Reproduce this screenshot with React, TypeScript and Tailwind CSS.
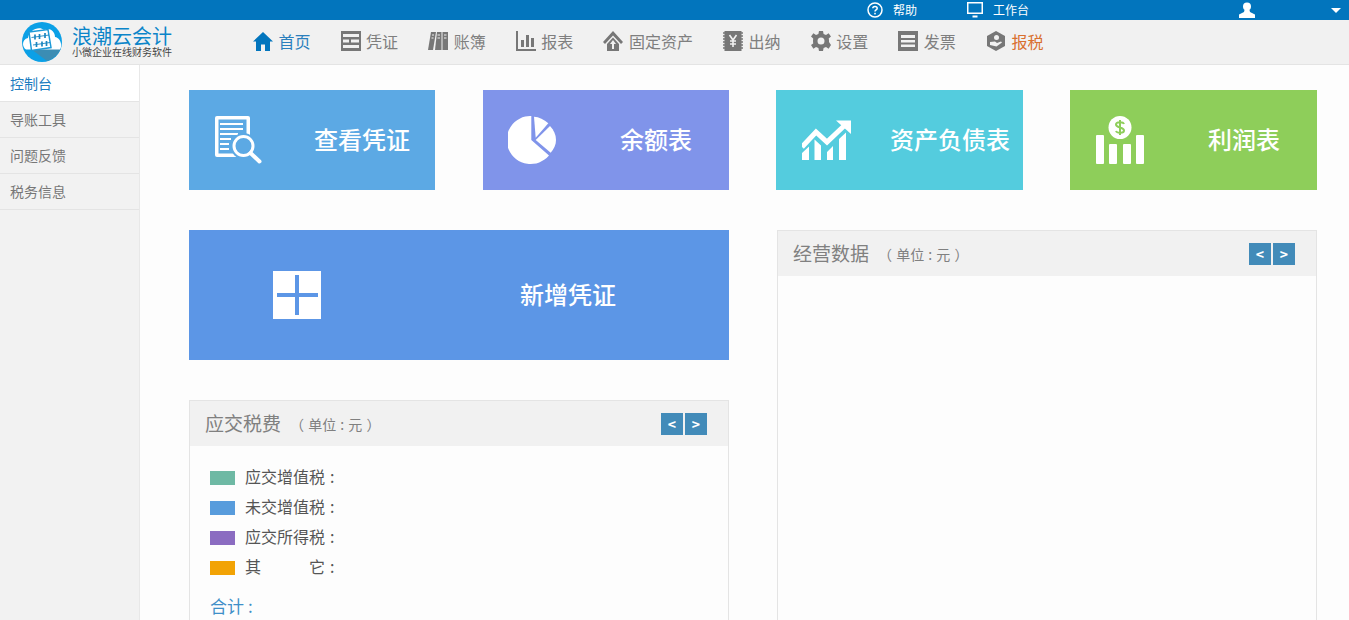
import type { ReactNode } from 'react'

const font = { fontFamily: '"Noto Sans CJK SC", "Liberation Sans", sans-serif' }

function Logo() {
  return (
    <svg width="40" height="40" viewBox="0 0 40 40" className="shrink-0">
      <circle cx="20" cy="20" r="20" fill="#0ba0e6" />
      <path d="M9 27 H38.500 C36 33 31 37 25 39 Z" fill="#3b8db4" />
      <path d="M4 27.500 C-0.500 25 0 17 6 16 C7 8 17 3.500 22 8 C27 5 33 9 33 15 C38 15.500 41 23 38 27.500 Z" fill="#fff" />
      <path d="M7 10 L26 7.500 L29 25.500 L9.500 28.500 Z" fill="#fff" stroke="#1c9ad8" strokeWidth="1.500" />
      <path d="M9.500 15.500 L27 13 M11 23 L28 20.500" stroke="#1b86c0" strokeWidth="0.900" />
      <path d="M13 12.500v5M17.500 12v5M23 11v5M14.500 20v5M20 19.500v5M24.500 19v5" stroke="#1b86c0" strokeWidth="1.700" />
    </svg>
  )
}

const navIcons: Record<string, ReactNode> = {
  home: <path d="M10 1 L20 10.500 H17 V20 H12 V13.500 H8 V20 H3 V10.500 H0Z" fill="currentColor" />,
  voucher: (
    <path fillRule="evenodd" d="M0 0H20V20H0Z M2 3V6H18V3Z M2 8.500V11.500H8V8.500Z M10 8.500V11.500H18V8.500Z M2 14V17H18V14Z" fill="currentColor" />
  ),
  books: (
    <g fill="currentColor">
      <path d="M3 1H8L5 19H0Z" />
      <path d="M9 1H13.500V19H7Z" />
      <rect x="14.500" y="1" width="5.500" height="18" />
      <path d="M4 4h2M9.500 4h2.500M16 4h2.500M3.500 7h2M9.500 7h2.500M16 7h2.500" stroke="#f1f1f1" strokeWidth="1" />
    </g>
  ),
  chart: (
    <g fill="currentColor">
      <path d="M0 0H2V18H20V20H0Z" />
      <rect x="5" y="9" width="3" height="7" />
      <rect x="10" y="4" width="3" height="12" />
      <rect x="15" y="7" width="3" height="9" />
    </g>
  ),
  asset: (
    <path fillRule="evenodd" d="M10 0 L20 11 L18 13 L10 4.500 L2 13 L0 11Z M10 6.500 L16 13 V20 H4 V13Z M10 9 L7 13 H9 V18 H11 V13 H13Z" fill="currentColor" />
  ),
  cash: (
    <g>
      <rect x="1.500" y="0" width="17" height="20" fill="currentColor" />
      <path d="M0 2h2M0 5h2M0 8h2M0 11h2M0 14h2M0 17h2M18 2h2M18 5h2M18 8h2M18 11h2M18 14h2M18 17h2" stroke="currentColor" strokeWidth="1.500" />
      <path d="M6.500 4 L10 9 L13.500 4 M10 9 V16 M7 10 H13 M7 13 H13" stroke="#f1f1f1" strokeWidth="1.600" fill="none" />
    </g>
  ),
  gear: (
    <path fillRule="evenodd" d="M8 0H12L12.600 3L15 4L17.600 2.300L20 5.500L17.700 7.500L18 9V11L20 14L17.600 17.700L15 15.900L12.600 17L12 20H8L7.400 17L5 15.900L2.400 17.700L0 14L2.200 12.500L2 10L2.200 7.500L0 5.500L2.400 2.300L5 4L7.400 3Z M10 6.500A3.500 3.500 0 1 0 10 13.500A3.500 3.500 0 1 0 10 6.500Z" fill="currentColor" />
  ),
  invoice: (
    <path fillRule="evenodd" d="M0 0H20V20H0Z M3 4V7H17V4Z M3 9V11.500H17V9Z M3 13.500V16H17V13.500Z" fill="currentColor" />
  ),
  tax: (
    <g>
      <path d="M10 0 L19 5 V15 L10 20 L1 15 V5Z" fill="currentColor" />
      <circle cx="10.500" cy="6.500" r="2.500" fill="#f1f1f1" />
      <path d="M4 11 L9 10.500 L11 12 L15 10.500 L16 11.500 L10.500 15.500 L4 14Z" fill="#f1f1f1" />
    </g>
  ),
}

const navItems = [
  { key: 'home', label: '首页', icon: 'text-[#0275bd]', text: 'text-[#2a7fbd]' },
  { key: 'voucher', label: '凭证', icon: 'text-[#777777]', text: 'text-[#7f7f7f]' },
  { key: 'books', label: '账簿', icon: 'text-[#777777]', text: 'text-[#7f7f7f]' },
  { key: 'chart', label: '报表', icon: 'text-[#777777]', text: 'text-[#7f7f7f]' },
  { key: 'asset', label: '固定资产', icon: 'text-[#777777]', text: 'text-[#7f7f7f]' },
  { key: 'cash', label: '出纳', icon: 'text-[#777777]', text: 'text-[#7f7f7f]' },
  { key: 'gear', label: '设置', icon: 'text-[#777777]', text: 'text-[#7f7f7f]' },
  { key: 'invoice', label: '发票', icon: 'text-[#777777]', text: 'text-[#7f7f7f]' },
  { key: 'tax', label: '报税', icon: 'text-[#777777]', text: 'text-[#d9702f]' },
]

function TopBar() {
  return (
    <div className="flex h-5 items-center bg-[#0275bd] pl-[867px] text-xs text-white">
      <svg width="16" height="16" viewBox="0 0 16 16">
        <circle cx="8" cy="8" r="7" fill="none" stroke="#fff" strokeWidth="1.500" />
        <path d="M5.800 6.200C5.800 3.800 10.200 3.800 10.200 6.200C10.200 7.800 8 7.800 8 9.500" fill="none" stroke="#fff" strokeWidth="1.500" />
        <rect x="7.200" y="10.800" width="1.600" height="1.600" fill="#fff" />
      </svg>
      <span className="ml-[10px]">帮助</span>
      <svg width="16" height="16" viewBox="0 0 16 16" className="ml-[50px]">
        <path fillRule="evenodd" d="M0 0H16V12H0Z M1.500 1.500V10.500H14.500V1.500Z M5.500 13.500H10.500V15.500H5.500Z" fill="#fff" />
      </svg>
      <span className="ml-[10px]">工作台</span>
      <svg width="16" height="16" viewBox="0 0 16 16" className="ml-[210px]">
        <circle cx="8" cy="4.500" r="4" fill="#fff" />
        <path d="M5.500 8 L10.500 8 L11 10 L16 12.500 V16 H0 V12.500 L5 10Z" fill="#fff" />
      </svg>
      <span className="ml-[76px] h-0 w-0 border-x-[5px] border-t-[5px] border-x-transparent border-t-white" />
    </div>
  )
}

function Header() {
  return (
    <div className="flex h-[45px] items-center border-b border-[#e4e4e4] bg-[#f1f1f1]">
      <div className="ml-[22px] flex w-[231px] shrink-0 items-center gap-[10px]">
        <Logo />
        <div className="pb-[1px]">
          <div className="text-[20px] leading-5 text-[#0b85c9]">浪潮云会计</div>
          <div className="text-[10px] leading-3 text-[#444444]">小微企业在线财务软件</div>
        </div>
      </div>
      <div className="flex items-center gap-[30.100px] pb-[2px]">
        {navItems.map(item => (
          <div key={item.key} className="flex items-center gap-[5.500px]">
            <svg width="20" height="20" viewBox="0 0 20 20" className={item.icon}>
              {navIcons[item.key]}
            </svg>
            <span className={`text-base leading-5 ${item.text}`}>{item.label}</span>
          </div>
        ))}
      </div>
    </div>
  )
}

function Sidebar() {
  return (
    <div className="w-[140px] shrink-0 self-stretch border-r border-[#e8e8e8] bg-[#f2f2f2] text-sm">
      <div className="flex h-[37px] items-center border-b border-[#e4e4e4] bg-white pb-[1px] pl-[10px] text-[#1c7cc0]">控制台</div>
      {['导账工具', '问题反馈', '税务信息'].map(t => (
        <div key={t} className="flex h-9 items-center border-b border-[#e4e4e4] pb-[1px] pl-[10px] text-[#777777]">
          {t}
        </div>
      ))}
    </div>
  )
}

function Tile({ className, label, icon }: { className: string; label: string; icon: ReactNode }) {
  return (
    <div className={`flex h-[100px] items-center justify-between pb-[1px] text-2xl font-medium text-white ${className}`}>
      {icon}
      <span className="pb-[1px]">{label}</span>
    </div>
  )
}

const iconDoc = (
  <svg width="48" height="48" viewBox="0 0 48 48">
    <rect x="1" y="0" width="35" height="41" rx="2" fill="#fff" />
    <rect x="4.500" y="3.500" width="28" height="34" fill="#5ca9e4" />
    <path d="M6 8H29M6 13H29M6 18H24M6 23H17M6 28H15M6 33H15" stroke="#fff" strokeWidth="2" />
    <circle cx="29.500" cy="30" r="13" fill="#5ca9e4" />
    <circle cx="29.500" cy="30" r="9.500" fill="none" stroke="#fff" strokeWidth="3" />
    <path d="M36.500 37L45.500 45.500" stroke="#fff" strokeWidth="4" strokeLinecap="round" />
  </svg>
)

const iconPie = (
  <svg width="48" height="48" viewBox="0 0 48 48">
    <path d="M23.300 0V24L41 39.500A24 24 0 1 1 23.300 0Z" fill="#fff" />
    <path d="M26 0.700C31 1 36 3.500 40.300 7.300L27.700 21.700Z" fill="#fff" />
    <path d="M42 10C46 14 48 19 48 24C48 29 46 33 42.700 36.700L27.700 24Z" fill="#fff" />
  </svg>
)

const iconGrowth = (
  <svg width="49" height="40" viewBox="0 0 49 40">
    <path d="M0 27 L14 12 L25 22 L43 5" fill="none" stroke="#fff" strokeWidth="5" />
    <path d="M34 0.500 H49 V14Z" fill="#fff" />
    <path d="M0 33 L7 26.500 V40 H0Z M12.500 19.500 L19 25.500 V40 H12.500Z M25 32 L31 26 V40 H25Z M37 19 L44 12.500 V40 H37Z" fill="#fff" />
  </svg>
)

const iconMoney = (
  <svg width="48" height="48" viewBox="0 0 48 48">
    <circle cx="24" cy="11.500" r="11.500" fill="#fff" />
    <path d="M28 8C27 5.500 20 5.500 20 8.500C20 12 28 11 28 14.500C28 17.500 21 17.500 20 15M24 4V19" fill="none" stroke="#8ece5a" strokeWidth="2" />
    <rect x="0" y="19" width="8" height="29" rx="1" fill="#fff" />
    <rect x="13" y="28" width="8" height="20" rx="1" fill="#fff" />
    <rect x="27" y="28" width="8" height="20" rx="1" fill="#fff" />
    <rect x="40" y="19" width="8" height="29" rx="1" fill="#fff" />
  </svg>
)

function Panel({ title, className, children }: { title: string; className: string; children?: ReactNode }) {
  return (
    <div className={`border border-[#e4e4e4] bg-[#fdfdfd] ${className}`}>
      <div className="flex h-[45px] items-center bg-[#f1f1f1] pl-[15px] pr-[21px]">
        <span className="pb-[1px] text-[19px] text-[#808080]">{title}</span>
        <span className="ml-[9px] text-sm text-[#808080] [word-spacing:1px]">（ 单位 : 元 ）</span>
        <div className="ml-auto flex gap-[2px]">
          <span className="flex h-[22px] w-[22px] items-center justify-center bg-[#428bb9] text-sm font-bold text-white">&lt;</span>
          <span className="flex h-[22px] w-[22px] items-center justify-center bg-[#428bb9] text-sm font-bold text-white">&gt;</span>
        </div>
      </div>
      {children}
    </div>
  )
}

const legend = [
  { color: 'bg-[#6eb9a4]', label: '应交增值税' },
  { color: 'bg-[#589cdc]', label: '未交增值税' },
  { color: 'bg-[#8b6cc1]', label: '应交所得税' },
]

function TaxLegend() {
  return (
    <div className="px-5 pt-4 text-base text-[#555555]">
      {legend.map(row => (
        <div key={row.label} className="flex h-[30px] items-center">
          <span className={`mt-[2px] h-[14px] w-[25px] ${row.color}`} />
          <span className="ml-[10px] w-[80px] pb-[2px]">{row.label}</span>
          <span className="ml-[5px] pb-[2px]">:</span>
        </div>
      ))}
      <div className="flex h-[30px] items-center">
        <span className="mt-[2px] h-[14px] w-[25px] bg-[#f2a305]" />
        <span className="ml-[10px] flex w-[80px] justify-between pb-[2px]">
          <span>其</span>
          <span>它</span>
        </span>
        <span className="ml-[5px] pb-[2px]">:</span>
      </div>
      <div className="mt-[10px] flex gap-[4px] text-[17px] leading-7 text-[#3f8fc8]">
        <span>合计</span>
        <span>:</span>
      </div>
    </div>
  )
}

export default function App() {
  return (
    <div className="h-[620px] overflow-hidden bg-white" style={font}>
      <TopBar />
      <Header />
      <div className="flex h-[555px]">
        <Sidebar />
        <div className="min-w-0 flex-1 bg-[#fdfdfd] pl-[49px] pt-[25px]">
          <div className="flex w-[1128px]">
            <Tile className="w-[246px] bg-[#5ca9e4] pl-[25px] pr-[25px]" label="查看凭证" icon={iconDoc} />
            <Tile className="ml-[48px] w-[246px] bg-[#8094ea] pl-[25px] pr-[37px]" label="余额表" icon={iconPie} />
            <Tile className="ml-[47px] w-[247px] bg-[#54ccde] pl-[26px] pr-[13px]" label="资产负债表" icon={iconGrowth} />
            <Tile className="ml-[47px] w-[247px] bg-[#8ece5a] pl-[26px] pr-[37px]" label="利润表" icon={iconMoney} />
          </div>
          <div className="mt-10 flex w-[1128px] items-start gap-x-[48px]">
            <div className="w-[540px] shrink-0">
              <div className="flex h-[130px] items-center bg-[#5c96e6] pl-[84px] text-2xl font-medium text-white">
                <div className="relative h-12 w-12 bg-white">
                  <span className="absolute left-[22px] top-1 h-10 w-1 bg-[#5c96e6]" />
                  <span className="absolute left-1 top-[22px] h-1 w-[41px] bg-[#5c96e6]" />
                </div>
                <span className="ml-[199px] pb-[2px]">新增凭证</span>
              </div>
              <Panel title="应交税费" className="mt-10 h-[300px]">
                <TaxLegend />
              </Panel>
            </div>
            <Panel title="经营数据" className="h-[400px] w-[540px] shrink-0" />
          </div>
        </div>
      </div>
    </div>
  )
}
